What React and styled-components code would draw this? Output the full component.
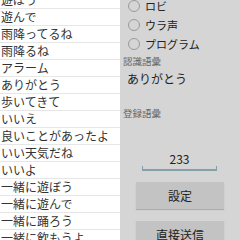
import React from "react";
import styled, { createGlobalStyle } from "styled-components";

const GlobalStyle = createGlobalStyle`
  body {
    margin: 0;
    font-family: "Noto Sans CJK JP", "Noto Sans", sans-serif;
  }
`;

const Screen = styled.div`
  display: grid;
  grid-template-columns: 120px 120px;
  width: 240px;
  height: 240px;
  overflow: hidden;
`;

const WordList = styled.ul`
  list-style: none;
  margin: 0;
  padding: 0;
  background: #ffffff;
  overflow: hidden;
`;

const Rows = styled.div`
  margin-top: -8px;
`;

const Row = styled.li`
  height: 16px;
  line-height: 16px;
  font-size: 12px;
  color: #333;
  padding-left: 1px;
  white-space: nowrap;
  border-bottom: 1px solid #e6e6e6;
`;

const Panel = styled.div`
  background: #d5d5d5;
  display: flex;
  flex-direction: column;
  overflow: hidden;
`;

const RadioGroup = styled.div`
  margin-top: -4px;
  display: flex;
  flex-direction: column;
`;

const RadioRow = styled.label`
  display: flex;
  align-items: center;
  gap: 5px;
  height: 19px;
  padding-left: 8px;
  font-size: 11px;
  color: #222;
`;

const Circle = styled.span`
  width: 10px;
  height: 10px;
  border-radius: 50%;
  border: 1px solid #9a9a9a;
`;

const Caption = styled.div`
  font-size: 9.5px;
  line-height: 12px;
  color: #666;
  padding-left: 3px;
  margin-top: ${({ $top }) => $top}px;
`;

const Value = styled.div`
  font-size: 12px;
  line-height: 16px;
  color: #222;
  padding-left: 7px;
  margin-top: 4px;
`;

const Field = styled.div`
  position: relative;
  margin: 32px 0 0 22px;
  width: 75px;
  height: 16px;
  padding-bottom: 2px;
  text-align: center;
  font-size: 12px;
  line-height: 16px;
  color: #222;
  border-bottom: 2px solid #82a0a6;

  &::before,
  &::after {
    content: "";
    position: absolute;
    bottom: -2px;
    width: 1px;
    height: 5px;
    background: #82a0a6;
  }
  &::before {
    left: 0;
  }
  &::after {
    right: 0;
  }
`;

const Button = styled.div`
  margin: ${({ $top }) => $top}px 0 0 16px;
  width: 88px;
  height: 27px;
  flex-shrink: 0;
  display: flex;
  align-items: center;
  justify-content: center;
  background: #c3c3c3;
  box-shadow: 0 1px 1px rgba(0, 0, 0, 0.18);
  font-size: 12px;
  color: #222;
`;

const words = [
  "遊ぼう",
  "遊んで",
  "雨降ってるね",
  "雨降るね",
  "アラーム",
  "ありがとう",
  "歩いてきて",
  "いいえ",
  "良いことがあったよ",
  "いい天気だね",
  "いいよ",
  "一緒に遊ぼう",
  "一緒に遊んで",
  "一緒に踊ろう",
  "一緒に飲もうよ",
];

export default function App() {
  return (
    <>
      <GlobalStyle />
      <Screen>
        <WordList>
          <Rows>
            {words.map((w) => (
              <Row key={w}>{w}</Row>
            ))}
          </Rows>
        </WordList>
        <Panel>
          <RadioGroup>
            {["ロビ", "ウラ声", "プログラム"].map((r) => (
              <RadioRow key={r}>
                <Circle />
                {r}
              </RadioRow>
            ))}
          </RadioGroup>
          <Caption $top={2}>認識語彙</Caption>
          <Value>ありがとう</Value>
          <Caption $top={20}>登録語彙</Caption>
          <Field>233</Field>
          <Button $top={11}>設定</Button>
          <Button $top={12}>直接送信</Button>
        </Panel>
      </Screen>
    </>
  );
}
